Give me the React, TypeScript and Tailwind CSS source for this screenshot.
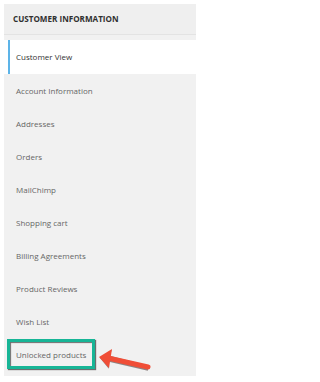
import React from "react";

const tabs = [
  "Customer View",
  "Account Information",
  "Addresses",
  "Orders",
  "MailChimp",
  "Shopping cart",
  "Billing Agreements",
  "Product Reviews",
  "Wish List",
  "Unlocked products",
];

export default function App() {
  return (
    <div className="w-[200px] h-[382px] bg-white pt-1 px-1 font-['Open_Sans',sans-serif]">
      <div className="relative w-[192px] bg-[#f1f1f1] pb-[5px]">
        {/* Section title */}
        <div className="h-[31px] flex items-center pl-[9px] border-b border-[#e3e3e3] bg-[#efefef]">
          <span className="text-[8.1px] font-bold text-[#303030]">
            CUSTOMER INFORMATION
          </span>
        </div>
        <div className="h-[5px]" />

        {/* Tabs */}
        <ul>
          {tabs.map((tab, i) => (
            <li
              key={tab}
              className={
                i === 0
                  ? "relative h-[34px] flex items-center pl-3 bg-white text-[8px] text-[#333]"
                  : "h-[33px] flex items-center pl-3 text-[8px] text-[#666]"
              }
            >
              {i === 0 && (
                <span className="absolute left-1 top-0 bottom-0 w-[2px] bg-[#5db4e8]" />
              )}
              {tab}
            </li>
          ))}
        </ul>

        {/* Highlight box */}
        <div className="absolute left-[3px] top-[335px] w-[88px] h-[30px] border-[3px] border-[#17b596] shadow-[1px_1px_1px_rgba(0,0,0,0.55),inset_1px_1px_1px_rgba(0,0,0,0.55)]" />

        {/* Arrow */}
        <svg
          className="absolute left-[90px] top-[340px]"
          width="62"
          height="30"
          viewBox="0 0 62 30"
        >
          <g transform="translate(0.8,0.8)" fill="#3a2a28" opacity="0.55">
            <path d="M5 13 L17 5 L15 11 L54 21 L53 26 L14 17 L14 24 Z" />
          </g>
          <path
            d="M14 14 L54 23"
            stroke="#f04e37"
            strokeWidth="5"
            strokeLinecap="round"
          />
          <path d="M5 13 L18 5 L15 24 Z" fill="#f04e37" />
        </svg>
      </div>
    </div>
  );
}
